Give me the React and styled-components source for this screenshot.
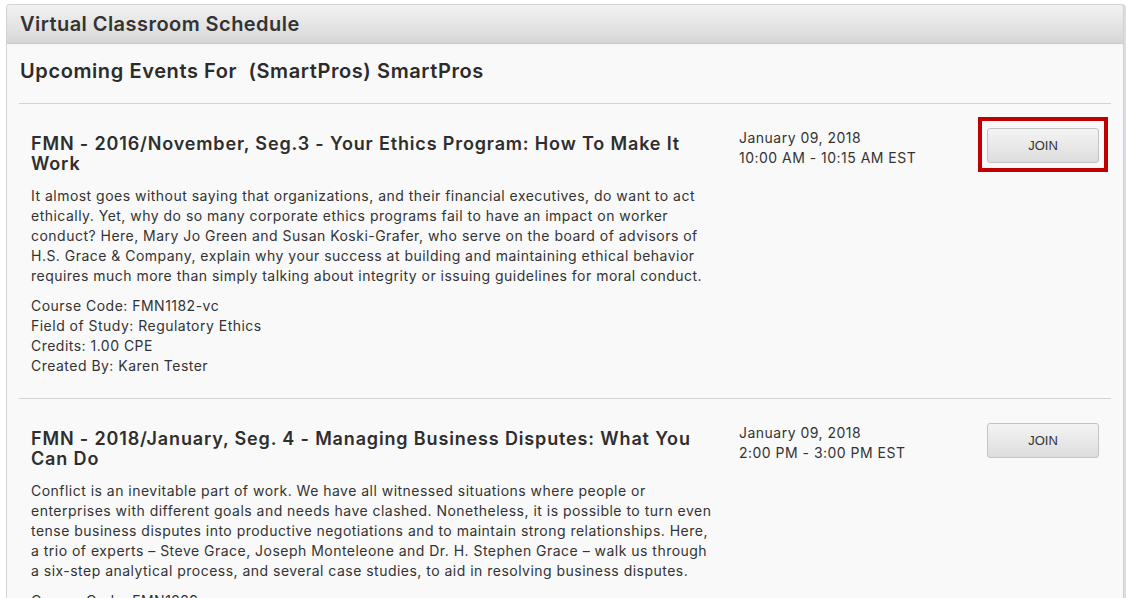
import React from "react";
import styled, { createGlobalStyle } from "styled-components";

const GlobalStyle = createGlobalStyle`
  html, body {
    margin: 0;
    padding: 0;
    background: #ffffff;
  }
  body {
    font-family: Inter, "Open Sans", sans-serif;
    color: #333333;
  }
`;

const Panel = styled.section`
  margin: 4px 0 0 6px;
  width: 1116px;
  background: #f9f9f9;
  border: 1px solid #d2d2d2;
  border-bottom: none;
  border-radius: 4px 4px 0 0;
  box-shadow: 2px 0 0 #dcdce6;
  min-height: 600px;
`;

const PanelHeader = styled.header`
  height: 38px;
  display: flex;
  align-items: center;
  padding: 0 13px;
  background: linear-gradient(#f1f1f1, #e4e4e4 55%, #d6d6d6);
  border-bottom: 1px solid #c9c9c9;
  border-radius: 3px 3px 0 0;
  font-size: 20px;
  letter-spacing: 0.45px;
  font-weight: 600;
  color: #333;
`;

const PanelBody = styled.div`
  padding: 15px 12px 0 12px;
`;

const Heading = styled.h2`
  margin: 0 0 20px 1px;
  font-size: 20px;
  letter-spacing: 0.6px;
  line-height: 24px;
  font-weight: 600;
  color: #2b2b2b;
`;

const EventRow = styled.article`
  display: grid;
  grid-template-columns: 680px 1fr 112px;
  column-gap: 28px;
  align-items: start;
  padding: 22px 12px 22px 12px;
  border-top: 1px solid #d3d3d3;
`;

const EventTitle = styled.h3`
  margin: 8px 0 0;
  font-size: 18px;
  letter-spacing: 0.85px;
  line-height: 20px;
  font-weight: 600;
  color: #2e2e2e;
`;

const Description = styled.p`
  margin: 12px 0 0;
  font-size: 14px;
  letter-spacing: 0.48px;
  line-height: 20px;
  white-space: nowrap;
`;

const Line = styled.span`
  display: block;
`;

const Details = styled.div`
  margin-top: 10px;
  font-size: 14px;
  letter-spacing: 0.48px;
  line-height: 20px;
`;

const When = styled.div`
  margin-top: 2px;
  font-size: 14px;
  letter-spacing: 0.48px;
  line-height: 20px;
`;

const HighlightFrame = styled.div`
  margin: -9px;
  padding: 5px;
  border: 4px solid ${(p) => (p.$on ? "#c00000" : "transparent")};
`;

const JoinButton = styled.button`
  display: block;
  width: 112px;
  height: 35px;
  margin-top: 2px;
  padding: 0;
  border: 1px solid #c3c3c3;
  border-radius: 3px;
  background: linear-gradient(#f4f4f4, #dddddd);
  font-family: "Liberation Sans", Arial, sans-serif;
  font-size: 13px;
  color: #333;
  cursor: pointer;
`;

const events = [
  {
    title: "FMN - 2016/November, Seg.3 - Your Ethics Program: How To Make It Work",
    description: [
      "It almost goes without saying that organizations, and their financial executives, do want to act",
      "ethically. Yet, why do so many corporate ethics programs fail to have an impact on worker",
      "conduct? Here, Mary Jo Green and Susan Koski-Grafer, who serve on the board of advisors of",
      "H.S. Grace & Company, explain why your success at building and maintaining ethical behavior",
      "requires much more than simply talking about integrity or issuing guidelines for moral conduct.",
    ],
    code: "FMN1182-vc",
    field: "Regulatory Ethics",
    credits: "1.00 CPE",
    author: "Karen Tester",
    date: "January 09, 2018",
    time: "10:00 AM - 10:15 AM EST",
    highlight: true,
  },
  {
    title: "FMN - 2018/January, Seg. 4 - Managing Business Disputes: What You Can Do",
    description: [
      "Conflict is an inevitable part of work. We have all witnessed situations where people or",
      "enterprises with different goals and needs have clashed. Nonetheless, it is possible to turn even",
      "tense business disputes into productive negotiations and to maintain strong relationships. Here,",
      "a trio of experts \u2013 Steve Grace, Joseph Monteleone and Dr. H. Stephen Grace \u2013 walk us through",
      "a six-step analytical process, and several case studies, to aid in resolving business disputes.",
    ],
    code: "FMN1229-vc",
    field: "Management",
    credits: "1.00 CPE",
    author: "Karen Tester",
    date: "January 09, 2018",
    time: "2:00 PM - 3:00 PM EST",
    highlight: false,
  },
];

const App = () => (
  <>
    <GlobalStyle />
    <Panel>
      <PanelHeader>Virtual Classroom Schedule</PanelHeader>
      <PanelBody>
        <Heading>Upcoming Events For &nbsp;(SmartPros) SmartPros</Heading>
        {events.map((ev) => (
          <EventRow key={ev.code}>
            <div>
              <EventTitle>{ev.title}</EventTitle>
              <Description>
                {ev.description.map((line) => (
                  <Line key={line}>{line}</Line>
                ))}
              </Description>
              <Details>
                <div>Course Code: {ev.code}</div>
                <div>Field of Study: {ev.field}</div>
                <div>Credits: {ev.credits}</div>
                <div>Created By: {ev.author}</div>
              </Details>
            </div>
            <When>
              <div>{ev.date}</div>
              <div>{ev.time}</div>
            </When>
            <div>
              <HighlightFrame $on={ev.highlight}>
                <JoinButton>JOIN</JoinButton>
              </HighlightFrame>
            </div>
          </EventRow>
        ))}
      </PanelBody>
    </Panel>
  </>
);

export default App;
